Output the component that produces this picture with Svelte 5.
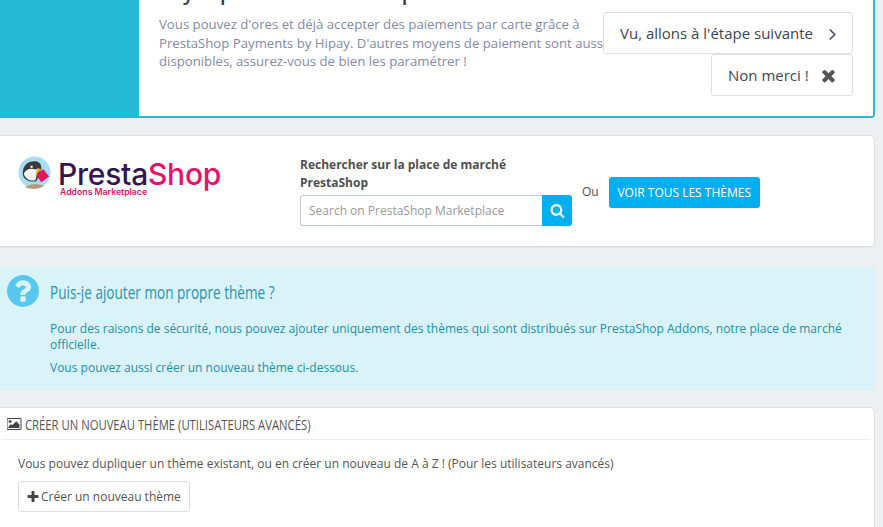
<script>
  const faSearch = "M1216 832q0-185-131.5-316.5t-316.5-131.5-316.5 131.5-131.5 316.5 131.5 316.5 316.5 131.5 316.5-131.5 131.5-316.5zm512 832q0 52-38 90t-90 38q-54 0-90-38l-343-342q-179 124-399 124-143 0-273.5-55.5t-225-150-150-225-55.5-273.5 55.5-273.5 150-225 225-150 273.5-55.5 273.5 55.5 225 150 150 225 55.5 273.5q0 220-124 399l343 343q37 37 37 90z";
  const faTimes = "M1490 1322q0 40-28 68l-136 136q-28 28-68 28t-68-28l-294-294-294 294q-28 28-68 28t-68-28l-136-136q-28-28-28-68t28-68l294-294-294-294q-28-28-28-68t28-68l136-136q28-28 68-28t68 28l294 294 294-294q28-28 68-28t68 28l136 136q28 28 28 68t-28 68l-294 294 294 294q28 28 28 68z";
  const faPlus = "M1600 736v192q0 40-28 68t-68 28h-416v416q0 40-28 68t-68 28h-192q-40 0-68-28t-28-68v-416h-416q-40 0-68-28t-28-68v-192q0-40 28-68t68-28h416v-416q0-40 28-68t68-28h192q40 0 68 28t28 68v416h416q40 0 68 28t28 68z";
  const faQuestion = "M1024 1376v-192q0-14-9-23t-23-9h-192q-14 0-23 9t-9 23v192q0 14 9 23t23 9h192q14 0 23-9t9-23zm256-672q0-88-55.5-163t-138.5-116-170-41q-243 0-371 213-15 24 8 42l132 100q7 6 19 6 16 0 25-12 53-68 86-92 34-24 86-24 48 0 85.5 26t37.5 59q0 38-20 61t-68 45q-63 28-115.5 86.5t-52.5 125.5v36q0 14 9 23t23 9h192q14 0 23-9t9-23q0-19 21.5-49.5t54.5-49.5q32-18 49-28.5t46-35 44.5-48 28-60.5 12.5-81zm384 192q0 209-103 385.5t-279.5 279.5-385.5 103-385.5-103-279.5-279.5-103-385.5 103-385.5 279.5-279.5 385.5-103 385.5 103 279.5 279.5 103 385.5z";
  const faPicture = "M576 576q0 80-56 136t-136 56-136-56-56-136 56-136 136-56 136 56 56 136zm1024 384v448h-1408v-192l320-320 160 160 512-512zm96-704h-1600q-13 0-22.5 9.5t-9.5 22.5v1216q0 13 9.5 22.5t22.5 9.5h1600q13 0 22.5-9.5t9.5-22.5v-1216q0-13-9.5-22.5t-22.5-9.5zm160 32v1216q0 66-47 113t-113 47h-1600q-66 0-113-47t-47-113v-1216q0-66 47-113t113-47h1600q66 0 113 47t47 113z";
</script>

<div class="page">
  <section class="banner">
    <div class="side"></div>
    <div class="main">
      <h2>Payez par carte bancaire pour vos achats</h2>
      <p>Vous pouvez d'ores et déjà accepter des paiements par carte grâce à PrestaShop Payments by Hipay. D'autres moyens de paiement sont aussi disponibles, assurez-vous de bien les paramétrer !</p>
      <div class="actions">
        <button class="big">Vu, allons à l'étape suivante
          <svg class="chev" viewBox="0 0 10 14" width="9" height="13"><path d="M2 1.500 7.500 7 2 12.500" fill="none" stroke="#4b4f5c" stroke-width="1.800"/></svg>
        </button>
        <button class="big no">Non merci !
          <svg viewBox="0 0 1792 1792" width="19" height="19"><path d={faTimes} fill="#555"/></svg>
        </button>
      </div>
    </div>
  </section>

  <section class="market">
    <div class="logo">
      <svg class="puffin" viewBox="0 0 34 34" width="33" height="33">
        <circle cx="17" cy="17" r="16.500" fill="#a9dcf5"/>
        <path d="M7 32 Q17 26 27 31 Q22 34 17 34 Q11 34 7 32Z" fill="#b49a7c"/>
        <path d="M5 19C4 9 12 4.500 18 5.500C23 6 24.500 10 24 14L19 26C12 27 6 25 5 19Z" fill="#3a3a3c"/>
        <path d="M6 18C8 13 14 12 18 14L21 13L18 25C12 26.500 7 23 6 18Z" fill="#f3f3f1"/>
        <path d="M20 12 L24 14 L18 20Z" fill="#f5a31a"/>
        <path d="M19 20L26 13.500L32 21L24 27Z" fill="#e5145f"/>
        <circle cx="14" cy="11" r="1.300" fill="#eee"/>
      </svg>
      <div class="wordmark">
        <div class="name"><span class="presta">Presta</span><span class="shop">Shop</span></div>
        <div class="addons">Addons Marketplace</div>
      </div>
    </div>
    <div class="search">
      <div class="search-title">Rechercher sur la place de marché PrestaShop</div>
      <div class="search-box">
        <input type="text" placeholder="Search on PrestaShop Marketplace" />
        <button class="search-btn" aria-label="Rechercher">
          <svg viewBox="0 0 1792 1792" width="15" height="15"><path d={faSearch} fill="#fff"/></svg>
        </button>
      </div>
    </div>
    <span class="or">Ou</span>
    <button class="all">VOIR TOUS LES THÈMES</button>
  </section>

  <section class="info">
    <div class="info-head">
      <svg viewBox="128 128 1536 1536" width="32" height="32"><path d={faQuestion} fill="#56c7ef"/></svg>
      <h3><span>Puis-je ajouter mon propre thème ?</span></h3>
    </div>
    <p>Pour des raisons de sécurité, nous pouvez ajouter uniquement des thèmes qui sont distribués sur PrestaShop Addons, notre place de marché officielle.</p>
    <p>Vous pouvez aussi créer un nouveau thème ci-dessous.</p>
  </section>

  <section class="panel">
    <div class="panel-head">
      <svg viewBox="0 128 1920 1536" width="15" height="12"><path d={faPicture} fill="#444"/></svg>
      <h4><span>CRÉER UN NOUVEAU THÈME (UTILISATEURS AVANCÉS)</span></h4>
    </div>
    <div class="panel-body">
      <p>Vous pouvez dupliquer un thème existant, ou en créer un nouveau de A à Z ! (Pour les utilisateurs avancés)</p>
      <button class="create">
        <svg viewBox="0 0 1792 1792" width="14" height="14"><path d={faPlus} fill="#444"/></svg>
        Créer un nouveau thème
      </button>
    </div>
  </section>
</div>

<style>
  :global(body) {
    margin: 0;
    background: #ecf0f1;
  }
  .page {
    height: 527px;
    overflow: hidden;
    padding-right: 8px;
    box-sizing: border-box;
    font-family: "Open Sans", sans-serif;
    color: #555;
    display: flex;
    flex-direction: column;
  }
  button {
    font-family: inherit;
    cursor: pointer;
  }

  .banner {
    display: flex;
    height: 118px;
    flex: none;
    background: #25b9d7;
    border-radius: 0 0 4px 0;
    padding: 0 2px 2px 0;
    box-sizing: border-box;
  }
  .side {
    width: 139px;
    flex: none;
  }
  .main {
    position: relative;
    flex: 1;
    background: #fff;
    padding-left: 20px;
    overflow: hidden;
  }
  .main h2 {
    margin: -21px 0 0;
    font-size: 20px;
    line-height: 27px;
    font-weight: 600;
    color: #363a41;
    white-space: nowrap;
  }
  .main p {
    margin: 9px 0 0;
    width: 465px;
    font-size: 13.2px;
    line-height: 18.5px;
    color: #828aa6;
  }
  .actions {
    position: absolute;
    top: 12px;
    right: 20px;
    display: flex;
    flex-direction: column;
    align-items: flex-end;
  }
  .big {
    height: 42px;
    box-sizing: border-box;
    width: 250px;
    display: flex;
    align-items: center;
    gap: 15px;
    padding: 0 0 0 16px;
    background: #fff;
    border: 1px solid #e1dfdc;
    border-radius: 3px;
    font-size: 15px;
    color: #414552;
  }
  .no {
    width: 142px;
    gap: 10px;
  }
  .chev {
    margin-top: 2px;
  }

  .market {
    margin-top: 17px;
    height: 112px;
    flex: none;
    box-sizing: border-box;
    background: #fff;
    border: 1px solid #dcdfe0;
    border-left: 0;
    border-radius: 0 5px 5px 0;
    box-shadow: 0 1px 1px rgba(0, 0, 0, 0.05);
    display: flex;
    align-items: flex-start;
    padding-left: 18px;
  }
  .logo {
    width: 282px;
    flex: none;
    display: flex;
    align-items: flex-start;
    padding-top: 20px;
    gap: 7px;
  }
  .puffin {
    flex: none;
  }
  .wordmark {
    margin-top: 4px;
  }
  .name {
    font-family: Inter, sans-serif;
    font-size: 30px;
    line-height: 28px;
    font-weight: 500;
    letter-spacing: -0.25px;
    white-space: nowrap;
  }
  .presta {
    color: #34154f;
  }
  .shop {
    color: #e8116a;
  }
  .addons {
    margin: 0 0 0 2px;
    font-family: Inter, sans-serif;
    font-size: 8.7px;
    line-height: 9px;
    font-weight: 600;
    color: #e8116a;
    white-space: nowrap;
  }
  .search {
    width: 272px;
    flex: none;
    padding-top: 20px;
  }
  .search-title {
    max-width: 230px;
    font-size: 12px;
    line-height: 18px;
    font-weight: 700;
    color: #4f4f4f;
  }
  .search-box {
    display: flex;
    height: 31px;
    margin-top: 3px;
  }
  .search-box input {
    flex: 1;
    min-width: 0;
    box-sizing: border-box;
    border: 1px solid #bbcdd2;
    border-right: 0;
    border-radius: 3px 0 0 3px;
    padding: 0 8px;
    font-family: inherit;
    font-size: 12px;
    outline: none;
  }
  .search-box input::placeholder {
    color: #999;
    opacity: 1;
  }
  .search-btn {
    width: 30px;
    flex: none;
    border: 0;
    padding: 0;
    background: #00aff0;
    border-radius: 0 3px 3px 0;
    display: flex;
    align-items: center;
    justify-content: center;
  }
  .or {
    margin: 48px 0 0 10px;
    font-size: 12px;
    line-height: 16px;
    color: #4f4f4f;
  }
  .all {
    margin: 41px 0 0 10px;
    width: 151px;
    height: 31px;
    border: 0;
    border-radius: 3px;
    padding: 0;
    background: #00aff0;
    color: #fff;
    font-size: 12px;
  }

  .info {
    margin-top: 20px;
    height: 123px;
    flex: none;
    box-sizing: border-box;
    background: #d9f3f9;
    padding: 8px 30px 0 7px;
    color: #2090a8;
    font-size: 12px;
    line-height: 16px;
  }
  .info-head {
    display: flex;
    align-items: center;
    gap: 11px;
    height: 32px;
    margin-bottom: 14px;
  }
  .info-head h3 {
    margin: 2px 0 0;
    font-size: 18px;
    line-height: 22px;
    font-weight: 500;
    color: #2b94ad;
    white-space: nowrap;
  }
  .info-head span {
    display: inline-block;
    transform: scaleX(0.755);
    transform-origin: left center;
  }
  .panel-head span {
    display: inline-block;
    transform: scaleX(0.752);
    transform-origin: left center;
  }
  .info p {
    margin: 0 0 7px 43px;
  }

  .panel {
    margin-top: 17px;
    height: 180px;
    flex: none;
    background: #fff;
    border: 1px solid #dcdfe0;
    border-left: 0;
    border-radius: 0 5px 0 0;
    box-sizing: border-box;
  }
  .panel-head {
    display: flex;
    align-items: center;
    gap: 3px;
    height: 31px;
    margin: 0 4px 0 2px;
    padding-left: 5px;
    border-bottom: 1px solid #eeeeee;
  }
  .panel-head h4 {
    margin: 0;
    font-size: 15px;
    line-height: 20px;
    font-weight: 500;
    color: #555;
    white-space: nowrap;
  }
  .panel-body {
    padding: 16px 0 0 18px;
  }
  .panel-body p {
    margin: 0;
    font-size: 12px;
    line-height: 16px;
    color: #555;
  }
  .create {
    margin-top: 9px;
    width: 172px;
    height: 31px;
    box-sizing: border-box;
    display: flex;
    align-items: center;
    gap: 1px;
    padding: 0 0 0 7px;
    background: #fff;
    border: 1px solid #dcdcdc;
    border-radius: 3px;
    font-size: 12px;
    color: #555;
  }
</style>
